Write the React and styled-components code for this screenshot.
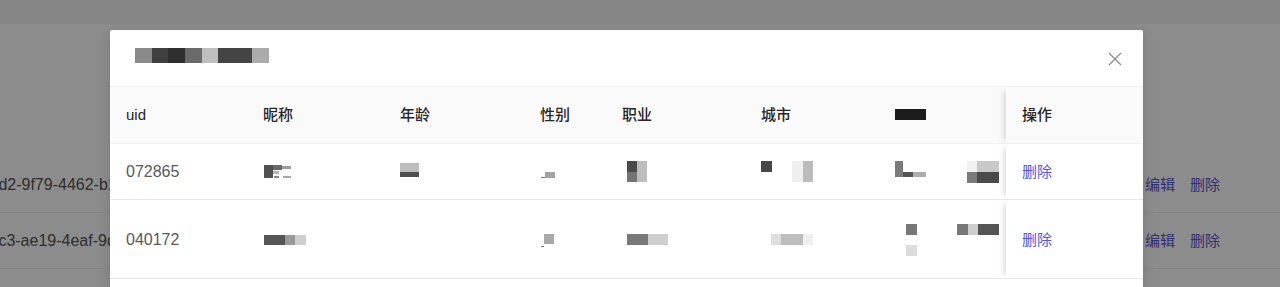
import React from 'react';
import styled, { createGlobalStyle, css } from 'styled-components';

const GlobalStyle = createGlobalStyle`
  html, body { margin: 0; padding: 0; }
  body {
    width: 1280px;
    height: 287px;
    overflow: hidden;
    background: #fff;
    font-family: "Liberation Sans", "Noto Sans CJK SC", sans-serif;
  }
  * { box-sizing: border-box; }
`;

/* ---------- background page (under the mask) ---------- */
const Page = styled.div`
  position: relative;
  width: 1280px;
  height: 287px;
  overflow: hidden;
  background: #fff;
`;

const TopBar = styled.div`
  height: 24px;
  background: #f4f4f4;
`;

const BgHeaderArea = styled.div`
  height: 133px;
`;

const BgTable = styled.div`
  margin-left: -71px;
`;

const BgRow = styled.div`
  display: flex;
  align-items: center;
  height: 56px;
  border-bottom: 1px solid #eeeeee;
`;

const BgIdCell = styled.div`
  flex: none;
  padding: 0 16px;
  font-size: 16px;
  color: #545454;
  white-space: nowrap;
`;

const BgFill = styled.div`
  flex: 1;
`;

const BgActionCell = styled.div`
  flex: none;
  width: 151px;
  padding: 0 16px;
  display: flex;
  gap: 15px;
`;

const LinkText = styled.span`
  color: #5558d6;
  font-size: 15px;
  line-height: 22px;
  white-space: nowrap;
`;

const Mask = styled.div`
  position: absolute;
  inset: 0;
  background: rgba(0, 0, 0, 0.45);
`;

/* ---------- modal ---------- */
const Modal = styled.div`
  position: absolute;
  top: 30px;
  left: 110px;
  width: 1033px;
  bottom: -20px;
  background: #fff;
  border-radius: 2px 2px 0 0;
  box-shadow: 0 4px 12px rgba(0, 0, 0, 0.15);
  overflow: hidden;
`;

const ModalHeader = styled.div`
  display: flex;
  align-items: flex-start;
  height: 57px;
  padding: 16px 0 0 24px;
  border-bottom: 1px solid #f0f0f0;
`;

const Title = styled.div`
  height: 22px;
`;

const CloseButton = styled.button`
  margin: -15px 0 0 auto;
  width: 56px;
  height: 56px;
  padding: 0;
  border: 0;
  background: none;
  display: flex;
  align-items: center;
  justify-content: center;
  color: #8c8c8c;
  cursor: pointer;
`;

const Table = styled.table`
  width: 1033px;
  table-layout: fixed;
  border-collapse: separate;
  border-spacing: 0;
`;

const Col = styled.col`
  width: ${(p) => p.$w}px;
`;

const fixedRight = css`
  position: sticky;
  right: 0;
  box-shadow: -6px 0 6px -4px rgba(0, 0, 0, 0.15);
`;

const Th = styled.th`
  background: #fafafa;
  padding: 17px 16px;
  line-height: 22px;
  font-size: 15px;
  font-weight: 500;
  color: #262626;
  text-align: left;
  vertical-align: middle;
  border-bottom: 1px solid #f0f0f0;
  ${(p) => p.$fixed && fixedRight}
`;

const Td = styled.td`
  background: #fff;
  padding: 17px 16px 16px;
  line-height: 22px;
  font-size: 16px;
  color: #595959;
  vertical-align: middle;
  border-bottom: 1px solid #e8e8e8;
  white-space: nowrap;
  ${(p) => p.$fixed && fixedRight}
`;

const MosaicSvg = styled.svg`
  display: block;
  shape-rendering: crispEdges;
`;

function Mosaic({ w, h = 22, dy = 0, cells }) {
  return (
    <MosaicSvg width={w} height={h} viewBox={`0 0 ${w} ${h}`}>
      {cells.map(([x, y, cw, ch, c], i) => (
        <rect key={i} x={x} y={y + dy} width={cw} height={ch} fill={c} />
      ))}
    </MosaicSvg>
  );
}

const CloseIcon = () => (
  <svg width="14" height="14" viewBox="0 0 14 14" fill="none">
    <path d="M1 1L13 13M13 1L1 13" stroke="currentColor" strokeWidth="1.3" />
  </svg>
);

const titleCells = [
  [1, 2, 17, 15, '#8a8a8a'],
  [18, 2, 16, 15, '#404040'],
  [34, 2, 17, 15, '#2f2f2f'],
  [51, 2, 17, 15, '#6b6b6b'],
  [68, 2, 16, 15, '#bebebe'],
  [84, 2, 34, 15, '#444444'],
  [118, 2, 17, 15, '#ababab'],
];

const columns = [
  { key: 'uid', title: 'uid', w: 137 },
  { key: 'nick', title: '昵称', w: 137 },
  { key: 'age', title: '年龄', w: 140 },
  { key: 'gender', title: '性别', w: 82 },
  { key: 'job', title: '职业', w: 139 },
  { key: 'city', title: '城市', w: 134 },
  { key: 'extra', title: null, w: 127 },
];

const rows = [
  {
    uid: '072865',
    h: 22,
    dy: 0,
    nick: { w: 30, cells: [[1, 4, 9, 13, '#505050'], [10, 4, 9, 5, '#6a6a6a'], [19, 5, 9, 3, '#9a9a9a'], [10, 10, 6, 3, '#b5b5b5'], [11, 15, 5, 2, '#8a8a8a'], [20, 15, 8, 2, '#a8a8a8']] },
    age: { w: 20, cells: [[0, 2, 19, 9, '#bdbdbd'], [0, 11, 19, 5, '#4f4f4f']] },
    gender: { w: 16, cells: [[5, 11, 10, 6, '#a3a3a3'], [1, 16, 4, 1, '#7a7a7a']] },
    job: { w: 26, cells: [[5, 0, 10, 11, '#4a4a4a'], [5, 11, 10, 10, '#747474'], [15, 0, 10, 21, '#bdbdbd']] },
    city: { w: 53, cells: [[0, 0, 11, 11, '#474747'], [31, 0, 11, 21, '#efefef'], [42, 0, 10, 21, '#bcbcbc']] },
    extra: { w: 104, cells: [[0, 0, 8, 16, '#7a7a7a'], [8, 11, 10, 5, '#555555'], [18, 11, 13, 5, '#adadad'], [72, 0, 10, 11, '#f0f0f0'], [82, 0, 22, 11, '#c9c9c9'], [72, 11, 10, 11, '#7a7a7a'], [82, 11, 22, 11, '#4a4a4a']] },
  },
  {
    uid: '040172',
    h: 45,
    dy: 1,
    nick: { w: 44, cells: [[1, 17, 21, 10, '#555555'], [22, 17, 10, 10, '#9a9a9a'], [32, 17, 11, 10, '#cfcfcf']] },
    age: null,
    gender: { w: 16, cells: [[4, 16, 10, 10, '#a8a8a8'], [1, 28, 3, 1, '#777777']] },
    job: { w: 47, cells: [[5, 16, 21, 11, '#787878'], [26, 16, 20, 11, '#cfcfcf']] },
    city: { w: 53, cells: [[10, 16, 10, 11, '#dedede'], [20, 16, 22, 11, '#bdbdbd'], [42, 16, 10, 11, '#efefef']] },
    extra: { w: 104, cells: [[11, 6, 11, 11, '#787878'], [11, 27, 11, 11, '#dcdcdc'], [62, 6, 11, 11, '#777777'], [73, 6, 10, 11, '#cdcdcd'], [83, 6, 21, 11, '#555555']] },
  },
];

const bgRows = [
  '7a0e41d2-9f79-4462-b1c5-3e8d02f6a7c4',
  'e5b803c3-ae19-4eaf-9d27-6c1f58b0e413',
];

export default function App() {
  return (
    <>
      <GlobalStyle />
      <Page>
        <TopBar />
        <BgHeaderArea />
        <BgTable>
          {bgRows.map((id) => (
            <BgRow key={id}>
              <BgIdCell>{id}</BgIdCell>
              <BgFill />
              <BgActionCell>
                <LinkText>编辑</LinkText>
                <LinkText>删除</LinkText>
              </BgActionCell>
            </BgRow>
          ))}
        </BgTable>

        <Mask />

        <Modal>
          <ModalHeader>
            <Title>
              <Mosaic w={136} cells={titleCells} />
            </Title>
            <CloseButton aria-label="关闭">
              <CloseIcon />
            </CloseButton>
          </ModalHeader>
          <Table>
            <colgroup>
              {columns.map((c) => (
                <Col key={c.key} $w={c.w} />
              ))}
              <Col $w={137} />
            </colgroup>
            <thead>
              <tr>
                {columns.map((c) => (
                  <Th key={c.key}>
                    {c.title ?? <Mosaic w={31} cells={[[0, 5, 31, 11, '#1c1c1c']]} />}
                  </Th>
                ))}
                <Th $fixed>操作</Th>
              </tr>
            </thead>
            <tbody>
              {rows.map((r) => (
                <tr key={r.uid}>
                  <Td>{r.uid}</Td>
                  {['nick', 'age', 'gender', 'job', 'city', 'extra'].map((k) => (
                    <Td key={k}>
                      {r[k] ? <Mosaic w={r[k].w} h={r.h} dy={r.dy} cells={r[k].cells} /> : null}
                    </Td>
                  ))}
                  <Td $fixed>
                    <LinkText>删除</LinkText>
                  </Td>
                </tr>
              ))}
            </tbody>
          </Table>
        </Modal>
      </Page>
    </>
  );
}
